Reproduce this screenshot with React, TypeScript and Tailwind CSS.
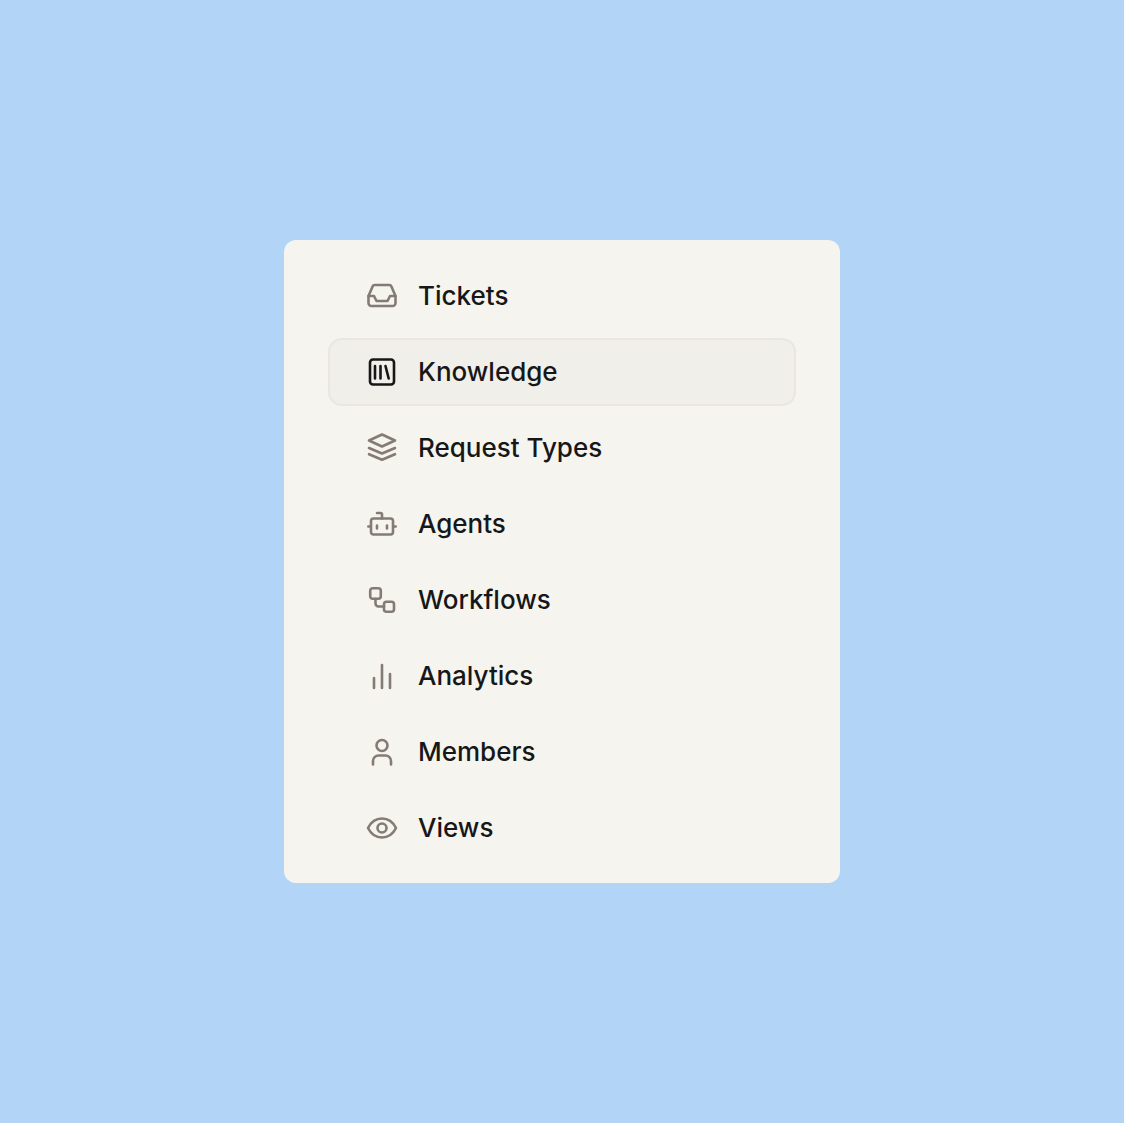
import React from "react";

const icons: Record<string, React.ReactNode> = {
  Tickets: (
    <>
      <path d="M8.5 5H23.5a2 2 0 0 1 1.8 1.2L29.5 16V23a3 3 0 0 1-3 3H5.5a3 3 0 0 1-3-3V16L6.7 6.2A2 2 0 0 1 8.5 5Z" />
      <path d="M2.5 16H8L10.5 21H21.5L24 16H29.5" />
    </>
  ),
  Knowledge: (
    <>
      <rect x="4" y="3.5" width="24" height="25" rx="3" />
      <path d="M9 10V22.5M14.5 10V22.5M19.5 10L22.7 22.5" />
    </>
  ),
  "Request Types": (
    <>
      <path d="M16 2.5L29 8.5L16 14.5L3 8.5Z" />
      <path d="M3 16L16 21.5L29 16" />
      <path d="M3 22.2L16 27.8L29 22.2" />
    </>
  ),
  Agents: (
    <>
      <rect x="5" y="10.5" width="22" height="16" rx="2.5" />
      <path d="M16 10.5V6.5a1.5 1.5 0 0 0-1.5-1.5H11M2.3 18.5H4M28 18.5H29.7M11 17.5V20.5M21 17.5V20.5" />
    </>
  ),
  Workflows: (
    <>
      <rect x="4.2" y="4.2" width="10.6" height="10.6" rx="2.5" />
      <rect x="18" y="17.8" width="10" height="10" rx="2.5" />
      <path d="M9.5 15V19.5a3 3 0 0 0 3 3H18" />
    </>
  ),
  Analytics: <path d="M8 18V28M16 5V28M24 14V28" />,
  Members: (
    <>
      <circle cx="16" cy="9.5" r="5.5" />
      <path d="M7 28.5V25a5.5 5.5 0 0 1 5.5-5.5h7A5.5 5.5 0 0 1 25 25v3.5" />
    </>
  ),
  Views: (
    <>
      <path d="M2 16C5 10 10 6.5 16 6.5S27 10 30 16C27 22 22 25.5 16 25.5S5 22 2 16Z" />
      <circle cx="16" cy="16" r="4.5" />
    </>
  ),
};

const items = ["Tickets", "Knowledge", "Request Types", "Agents", "Workflows", "Analytics", "Members", "Views"];

export default function App() {
  return (
    <div className="min-h-screen bg-[#b2d4f6] flex items-center justify-center font-['Inter',sans-serif]">
      <nav className="w-[556px] bg-[#f5f4ef] rounded-[12px] px-[44px] pt-[22px] pb-[21px] flex flex-col gap-[8px]">
        {items.map((name) => {
          const active = name === "Knowledge";
          return (
            <div
              key={name}
              className={
                active
                  ? "h-[68px] flex items-center gap-[20px] pl-[36px] rounded-[14px] border-2 border-[#e9e7e0] bg-[#f0efea]"
                  : "h-[68px] flex items-center gap-[20px] pl-[36px] rounded-[14px] border-2 border-transparent"
              }
            >
              <svg
                viewBox="0 0 32 32"
                fill="none"
                strokeWidth={2.6}
                strokeLinecap="round"
                strokeLinejoin="round"
                className={active ? "w-[32px] h-[32px] stroke-[#171717] shrink-0" : "w-[32px] h-[32px] stroke-[#857b74] shrink-0"}
              >
                {icons[name]}
              </svg>
              <span className="text-[26px] leading-[36px] font-medium text-[#171717]">{name}</span>
            </div>
          );
        })}
      </nav>
    </div>
  );
}
